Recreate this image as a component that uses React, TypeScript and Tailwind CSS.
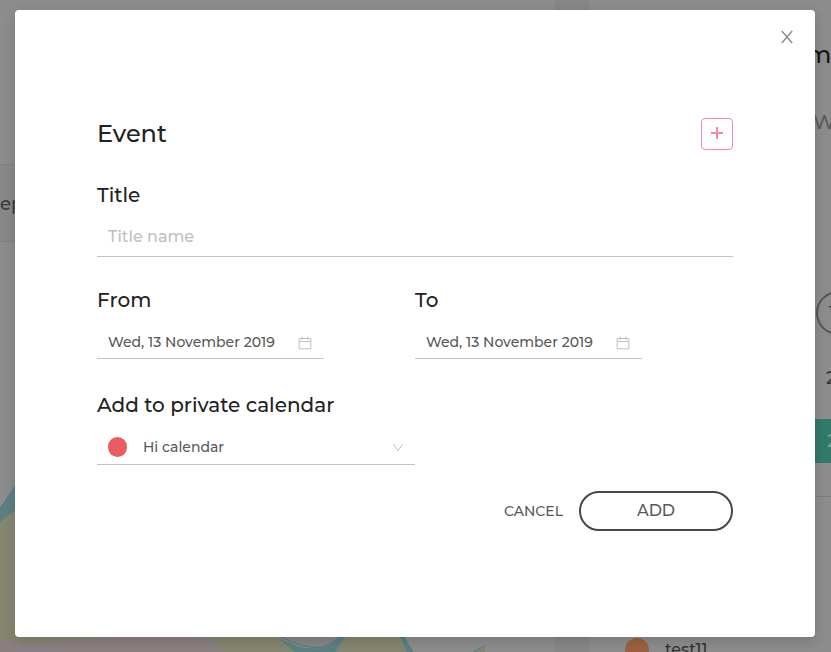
import React from "react";

function CloseIcon() {
  return (
    <svg className="size-4" viewBox="0 0 16 16" fill="none" stroke="currentColor" strokeWidth="1.4">
      <path d="M2.8 2L13.2 14M13.2 2L2.8 14" />
    </svg>
  );
}

function PlusIcon() {
  return (
    <svg className="size-4" viewBox="0 0 16 16" fill="currentColor">
      <path d="M7 1H9V6H14V8H9V13H7V8H2V6H7Z" />
    </svg>
  );
}

function CalendarIcon() {
  return (
    <svg className="mt-0.5 size-[14px]" viewBox="0 0 14 14" fill="none" stroke="#bfbfbf">
      <path d="M1.2 2.5H12.8V12.8H1.2ZM1.2 5.5H12.8M4.2 0.5V4M9.8 0.5V4" />
    </svg>
  );
}

function DownIcon() {
  return (
    <svg className="size-3" viewBox="0 0 12 12" fill="none" stroke="#bfbfbf">
      <path d="M1.3 3.3L6 9.7L10.7 3.3" />
    </svg>
  );
}

function AreaChart() {
  return (
    <svg className="block h-[172px] w-[555px] shrink-0" viewBox="0 480 555 172">
      <path d="M0 509L15 486L60 440V652H0Z" fill="#5c7f83" />
      <path d="M0 522L15 510L60 480V652H0Z" fill="#84866f" />
      <path d="M60 600H270L277 637Q318 660 340 637L350 600H385L404 637L413 652H60Z" fill="#5c7f83" />
      <path d="M60 600H260L277 637L295 652H60ZM335 652L345 637L360 600H385L400 637L407 652Z" fill="#84866f" />
      <path d="M278 630V636Q301 648 318 647.5Q328 647 341 636V630Z" fill="#868686" />
      <path d="M0 509L15 486M279 636Q301 648 318 647.5Q328 647 341 636M403 636L413 652M473 652L485 646" fill="none" stroke="#467d85" />
      <path d="M475 652L485 647V652Z" fill="#84866f" />
      <path d="M0 640Q45 646 110 636H200Q212 639 228 652H0Z" fill="#8a7f80" />
    </svg>
  );
}

function Backdrop() {
  return (
    <div className="flex h-full w-full bg-[#8c8c8c]">
      <div className="flex w-[555px] shrink-0 flex-col">
        <div className="h-[165px] border-b border-[#828282]" />
        <div className="flex h-[77px] items-center border-b border-[#818181] bg-[#888] pt-[2px] text-[18px] font-medium text-[#3c3c3c]">ep</div>
        <div className="h-[238px]" />
        <AreaChart />
      </div>
      <div className="w-[34px] shrink-0 border-r border-[#828282] bg-[#868686]" />
      <div className="flex w-[242px] shrink-0 flex-col overflow-hidden font-medium [&>*]:shrink-0">
        <div className="mt-[39px] h-8 pl-[217px] text-[24px] leading-8 text-[#161616]">m</div>
        <div className="mt-[35px] h-8 pl-[224px] text-[20px] leading-8 text-[#5b5b5b]">W</div>
        <div className="ml-[227px] mt-[153px] flex size-11 items-center rounded-full border-2 border-[#555] pl-[11px] text-[16px] text-[#333]">1</div>
        <div className="mt-[27px] h-8 pl-[237px] text-[18px] leading-8 text-[#333]">2</div>
        <div className="mt-[25px] h-11 bg-[#317969] pl-[238px] text-[18px] leading-[44px] text-[#78a198]">2</div>
        <div className="h-[34px] border-b border-[#7c7c7c]" />
        <div className="mt-[141px] flex h-6 items-center gap-4 pl-9">
          <span className="size-6 rounded-full bg-[#99613f]" />
          <span className="text-[16px] text-[#333]">test11</span>
        </div>
      </div>
    </div>
  );
}

function Label({ children, className = "" }: { children: React.ReactNode; className?: string }) {
  return <div className={"h-[30px] whitespace-nowrap text-[20px] leading-[30px] text-[#222] " + className}>{children}</div>;
}

function DateField({ label }: { label: string }) {
  return (
    <div className="w-[318px]">
      <Label>{label}</Label>
      <div className="mt-[11px] flex h-[33px] w-[227px] items-center justify-between border-b border-[#c4c4c4] pl-[11px] pr-3">
        <span className="whitespace-nowrap text-[14px] text-[#595959]">Wed, 13 November 2019</span>
        <CalendarIcon />
      </div>
    </div>
  );
}

export default function App() {
  return (
    <div className="relative h-[652px] w-[831px] overflow-hidden font-['Montserrat','Inter',sans-serif]">
      <Backdrop />
      <div className="absolute left-[15px] top-[10px] h-[627px] w-[800px] rounded-[4px] bg-white px-[82px] pt-[108px] font-medium shadow-[0_4px_12px_rgba(0,0,0,0.15)]">
        <button className="absolute right-5 top-[19px] text-[#8c8c8c]"><CloseIcon /></button>
        <div className="flex h-8 items-center justify-between">
          <h1 className="text-[24px] leading-8 text-[#222]">Event</h1>
          <button className="flex size-8 items-center justify-center rounded-[4px] border border-[#ff85a5] text-[#ff85a5]"><PlusIcon /></button>
        </div>
        <Label className="mt-[30px]">Title</Label>
        <div className="mt-[6px] flex h-[41px] items-center border-b border-[#c4c4c4] pl-[11px] pt-[2px] text-[16px] text-[#bfbfbf]">Title name</div>
        <div className="mt-[28px] flex">
          <DateField label="From" />
          <DateField label="To" />
        </div>
        <Label className="mt-[31px]">Add to private calendar</Label>
        <div className="mt-[12px] flex h-[33px] w-[318px] items-center border-b border-[#c4c4c4] pb-[2px] pl-[11px] pr-[11px]">
          <span className="h-5 w-[19px] rounded-full bg-[#e95d60]" />
          <span className="ml-4 flex-1 text-[14px] text-[#595959]">Hi calendar</span>
          <DownIcon />
        </div>
        <div className="mt-[26px] flex h-10 items-center justify-end gap-4 text-[#595959]">
          <button className="text-[14px]">CANCEL</button>
          <button className="h-10 w-[154px] rounded-full border-2 border-[#484848] text-[16px]">ADD</button>
        </div>
      </div>
    </div>
  );
}
